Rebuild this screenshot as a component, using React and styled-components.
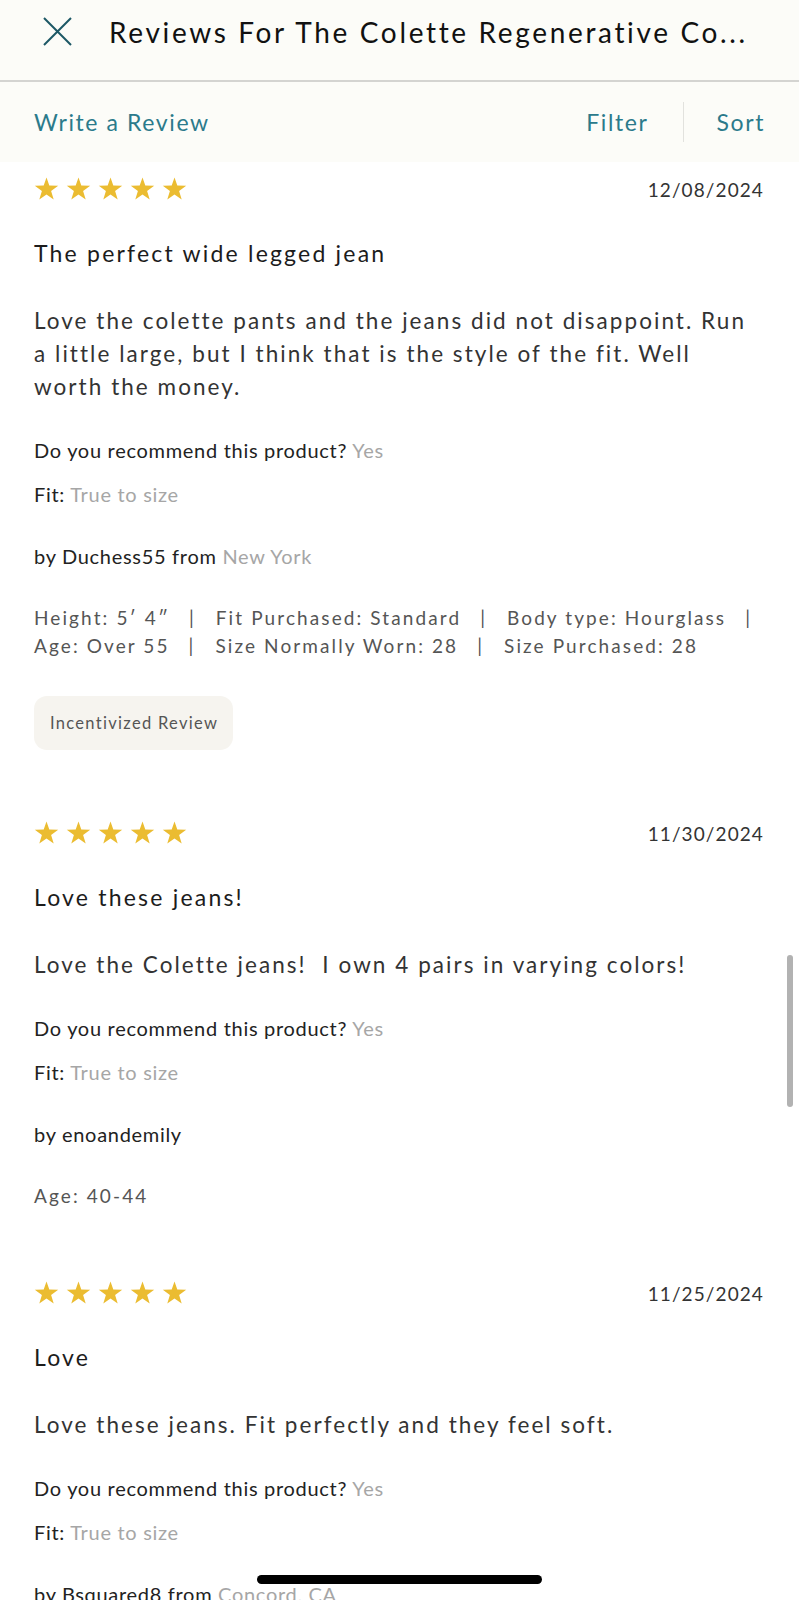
import { styled, createGlobalStyle } from "styled-components";

const GlobalStyle = createGlobalStyle`
  html, body {
    margin: 0;
    padding: 0;
    background: #ffffff;
  }
  body {
    font-family: "Lato", "Open Sans", sans-serif;
    -webkit-font-smoothing: antialiased;
  }
`;

const Page = styled.div`
  width: 799px;
  height: 100vh;
  overflow: hidden;
  position: relative;
  background: #ffffff;
`;

const Header = styled.header`
  height: 82px;
  box-sizing: border-box;
  padding: 17px 0 0 43px;
  display: flex;
  align-items: flex-start;
  gap: 37px;
  background: #fcfcf8;
  border-bottom: 2px solid #d4d4d1;
`;

const CloseButton = styled.button`
  width: 29px;
  height: 29px;
  padding: 0;
  border: none;
  background: none;
  display: flex;
  cursor: pointer;
`;

const Title = styled.h1`
  margin: 0;
  font-size: 28px;
  line-height: 30px;
  font-weight: 400;
  letter-spacing: 2.65px;
  color: #111111;
  white-space: nowrap;
`;

const Toolbar = styled.nav`
  height: 80px;
  box-sizing: border-box;
  padding: 0 34px 0 34px;
  display: flex;
  align-items: center;
  background: #fcfcf8;
`;

const ToolLink = styled.a`
  font-size: 23px;
  letter-spacing: 1.6px;
  color: #2b7a8b;
  text-decoration: none;
  cursor: pointer;
  flex: ${(p) => (p.$grow ? 1 : "none")};
`;

const ToolDivider = styled.span`
  width: 1px;
  height: 40px;
  margin: 0 33px 0 34px;
  background: #e2e2de;
`;

const List = styled.main`
  padding: 11px 35px 0 34px;
  display: flex;
  flex-direction: column;
  gap: 67px;
`;

const Review = styled.article`
  display: flex;
  flex-direction: column;
`;

const ReviewTop = styled.div`
  height: 32px;
  display: flex;
  align-items: center;
  justify-content: space-between;
`;

const Stars = styled.div`
  display: flex;
  gap: 7px;
`;

const DateText = styled.span`
  font-size: 19px;
  letter-spacing: 1.1px;
  color: #333333;
`;

const ReviewTitle = styled.h2`
  margin: 32px 0 0;
  font-size: 23px;
  line-height: 32px;
  font-weight: 400;
  letter-spacing: 2.2px;
  color: #1c1c1c;
`;

const Body = styled.p`
  margin: 35px 0 0;
  font-size: 22.5px;
  line-height: 33px;
  letter-spacing: 2.05px;
  color: #333333;
  white-space: pre-wrap;
`;

const Meta = styled.div`
  margin-top: ${(p) => p.$gap}px;
  font-size: 20px;
  line-height: 28px;
  letter-spacing: 0.7px;
  color: #222222;
`;

const MetaValue = styled.span`
  color: #a6a6a6;
`;

const Attributes = styled.div`
  margin: 34px -30px 0 0;
  display: flex;
  flex-wrap: wrap;
  font-size: 19px;
  line-height: 28px;
  letter-spacing: 2.1px;
  color: #555555;
`;

const Attr = styled.span`
  white-space: pre;
`;

const Sep = styled.span`
  margin: 0 20px 0 19px;
`;

const Badge = styled.div`
  margin-top: 36px;
  align-self: flex-start;
  height: 54px;
  padding: 0 15px 0 16px;
  display: flex;
  align-items: center;
  border-radius: 13px;
  background: #f6f4ef;
  font-size: 16.5px;
  letter-spacing: 1.3px;
  color: #555555;
`;

const Scrollbar = styled.div`
  position: fixed;
  top: 955px;
  right: 6px;
  width: 6px;
  height: 152px;
  border-radius: 3px;
  background: #b2b2b2;
`;

const HomeIndicator = styled.div`
  position: fixed;
  left: 257px;
  bottom: 16px;
  width: 285px;
  height: 9px;
  border-radius: 5px;
  background: #000000;
  z-index: 2;
`;

const CloseIcon = () => (
  <svg width="29" height="29" viewBox="0 0 29 29" fill="none">
    <path d="M1 1 L28 28 M28 1 L1 28" stroke="#1d5866" strokeWidth="2" />
  </svg>
);

const Star = () => (
  <svg width="25" height="24" viewBox="0 0 25 24">
    <path
      d="M12.5 0.5 L15.3 8.6 L24.2 8.8 L17.1 14 L19.7 22.6 L12.5 17.5 L5.3 22.6 L7.9 14 L0.8 8.8 L9.7 8.6 Z"
      fill="#ebbc31"
    />
  </svg>
);

const reviews = [
  {
    date: "12/08/2024",
    title: "The perfect wide legged jean",
    body: "Love the colette pants and the jeans did not disappoint. Run a little large, but I think that is the style of the fit. Well worth the money.",
    author: "Duchess55",
    from: "New York",
    attrs: [
      "Height: 5′ 4″",
      "Fit Purchased: Standard",
      "Body type: Hourglass",
      "Age: Over 55",
      "Size Normally Worn: 28",
      "Size Purchased: 28",
    ],
    incentivized: true,
  },
  {
    date: "11/30/2024",
    title: "Love these jeans!",
    body: "Love the Colette jeans!  I own 4 pairs in varying colors!",
    author: "enoandemily",
    attrs: ["Age: 40-44"],
  },
  {
    date: "11/25/2024",
    title: "Love",
    body: "Love these jeans. Fit perfectly and they feel soft.",
    author: "Bsquared8",
    from: "Concord, CA",
    attrs: [],
  },
];

function ReviewCard({ review }) {
  return (
    <Review>
      <ReviewTop>
        <Stars>
          {[0, 1, 2, 3, 4].map((i) => (
            <Star key={i} />
          ))}
        </Stars>
        <DateText>{review.date}</DateText>
      </ReviewTop>
      <ReviewTitle>{review.title}</ReviewTitle>
      <Body>{review.body}</Body>
      <Meta $gap={33}>
        Do you recommend this product? <MetaValue>Yes</MetaValue>
      </Meta>
      <Meta $gap={16}>
        Fit: <MetaValue>True to size</MetaValue>
      </Meta>
      <Meta $gap={34}>
        by {review.author}
        {review.from && (
          <>
            {" "}from <MetaValue>{review.from}</MetaValue>
          </>
        )}
      </Meta>
      {review.attrs.length > 0 && (
        <Attributes>
          {review.attrs.map((a, i) => (
            <Attr key={a}>
              {a}
              {i < review.attrs.length - 1 && <Sep>|</Sep>}
            </Attr>
          ))}
        </Attributes>
      )}
      {review.incentivized && <Badge>Incentivized Review</Badge>}
    </Review>
  );
}

export default function App() {
  return (
    <Page>
      <GlobalStyle />
      <Header>
        <CloseButton aria-label="Close">
          <CloseIcon />
        </CloseButton>
        <Title>Reviews For The Colette Regenerative Co...</Title>
      </Header>
      <Toolbar>
        <ToolLink $grow>Write a Review</ToolLink>
        <ToolLink>Filter</ToolLink>
        <ToolDivider />
        <ToolLink>Sort</ToolLink>
      </Toolbar>
      <List>
        {reviews.map((r) => (
          <ReviewCard key={r.date} review={r} />
        ))}
      </List>
      <Scrollbar />
      <HomeIndicator />
    </Page>
  );
}
